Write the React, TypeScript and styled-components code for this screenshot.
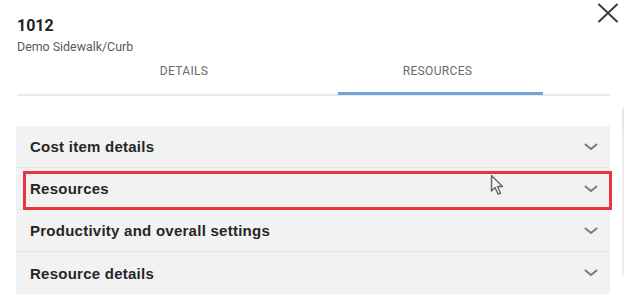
import React from "react";
import styled, { createGlobalStyle } from "styled-components";

const Global = createGlobalStyle`
  html, body { margin: 0; padding: 0; background: #ffffff; }
  body { font-family: Roboto, "Liberation Sans", Arial, sans-serif; }
  #root { width: 627px; height: 295px; overflow: hidden; }
`;

const Page = styled.div`
  position: relative;
  width: 627px;
  height: 295px;
  box-sizing: border-box;
  padding: 0 17px 0 16px;
  background: #fff;
`;

const Header = styled.div`
  display: flex;
  justify-content: space-between;
  align-items: flex-start;
  padding-left: 1px;
  margin-right: -10px;
`;

const Titles = styled.div`
  display: flex;
  flex-direction: column;
  padding-top: 17px;
`;

const Title = styled.div`
  font-size: 16px;
  font-weight: 700;
  line-height: 18px;
  color: #222;
`;

const Subtitle = styled.div`
  font-size: 12.4px;
  line-height: 14px;
  margin-top: 5px;
  color: #5c5866;
`;

const CloseButton = styled.button`
  border: 0;
  background: none;
  padding: 0;
  margin-top: 3px;
  width: 24px;
  height: 20px;
  display: flex;
  align-items: center;
  justify-content: center;
  cursor: pointer;
`;

const TabBar = styled.div`
  display: grid;
  grid-template-columns: 321px 205px 1fr;
  margin-left: 1px;
  margin-top: 4px;
  border-bottom: 2px solid #e9e9e9;
  height: 36px;
`;

const Tab = styled.div<{ $active?: boolean }>`
  display: flex;
  align-items: flex-start;
  justify-content: center;
  padding-top: 6px;
  font-size: 12px;
  letter-spacing: 0.35px;
  color: #6a6a6a;
  box-shadow: ${(p) => (p.$active ? "inset 0 -3px 0 #6fa4dd" : "none")};
  margin-bottom: ${(p) => (p.$active ? "-1px" : "0")};
  grid-column: ${(p) => (p.$active ? "2" : "1")};
  padding-left: ${(p) => (p.$active ? "0" : "13px")};
  padding-right: ${(p) => (p.$active ? "6px" : "0")};
`;

const Accordion = styled.div`
  margin-top: 30px;
  background: #f2f2f2;
  display: flex;
  flex-direction: column;
`;

const Row = styled.div`
  position: relative;
  height: 42px;
  display: flex;
  align-items: center;
  justify-content: space-between;
  padding: 0 12px 0 14px;
  box-sizing: border-box;
  border-bottom: 1px solid #e6e6e6;
  &:last-child { border-bottom: 0; }
`;

const RowLabel = styled.span`
  font-family: "Liberation Sans", Arial, sans-serif;
  font-size: 15px;
  font-weight: 700;
  color: #262626;
  letter-spacing: 0.25px;
`;

const Highlight = styled.div`
  position: absolute;
  left: 7px;
  right: -2px;
  top: 3px;
  bottom: -1px;
  border: 3px solid #ec343f;
  pointer-events: none;
`;

const Pointer = styled.svg`
  position: absolute;
  left: 474px;
  top: 6px;
`;

const ScrollEdge = styled.div`
  position: absolute;
  left: 622px;
  top: 108px;
  width: 2px;
  height: 168px;
  background: linear-gradient(#dfe9f4 0, #dfe9f4 25px, #ececec 26px, #ececec 100%);
`;

const Chevron = () => (
  <svg width="14" height="8" viewBox="0 0 14 8">
    <path d="M1.5 1.5 L7 6 L12.5 1.5" fill="none" stroke="#7a7a7a" strokeWidth="2" strokeLinecap="round" strokeLinejoin="round" />
  </svg>
);

const sections = [
  "Cost item details",
  "Resources",
  "Productivity and overall settings",
  "Resource details",
];

export default function App() {
  return (
    <>
      <Global />
      <Page>
        <Header>
          <Titles>
            <Title>1012</Title>
            <Subtitle>Demo Sidewalk/Curb</Subtitle>
          </Titles>
          <CloseButton aria-label="Close">
            <svg width="24" height="20" viewBox="0 0 24 20">
              <path d="M3 1.5 L21 18.5 M21 1.5 L3 18.5" stroke="#3d3d3d" strokeWidth="2" strokeLinecap="round" />
            </svg>
          </CloseButton>
        </Header>
        <TabBar>
          <Tab>DETAILS</Tab>
          <Tab $active>RESOURCES</Tab>
        </TabBar>
        <Accordion>
          {sections.map((s, i) => (
            <Row key={s}>
              <RowLabel>{s}</RowLabel>
              <Chevron />
              {i === 1 && (
                <>
                  <Highlight />
                  <Pointer width="16" height="22" viewBox="0 0 16 22">
                    <path
                      d="M1.5 1.5 L1.5 17 L5 13.5 L8 20 L10.5 19 L7.5 12.5 L12.5 12.5 Z"
                      fill="#f4f4f4"
                      stroke="#666"
                      strokeWidth="1.4"
                      strokeLinejoin="round"
                    />
                  </Pointer>
                </>
              )}
            </Row>
          ))}
        </Accordion>
        <ScrollEdge />
      </Page>
    </>
  );
}
